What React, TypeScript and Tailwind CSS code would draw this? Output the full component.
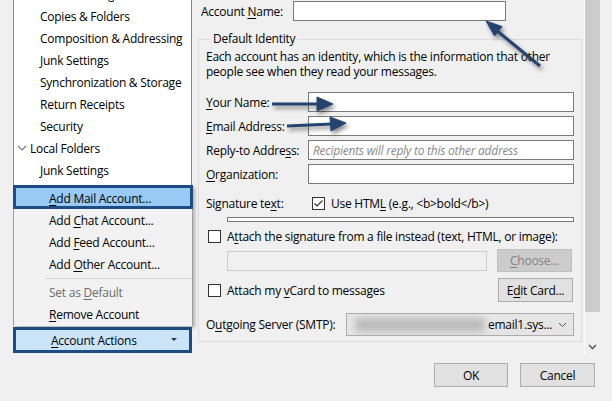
import React from "react"

const U = ({ children }: { children: React.ReactNode }) => <span className="underline underline-offset-[2px]">{children}</span>

const treeRows: { label: string; root?: boolean }[] = [
  { label: "Server Settings" },
  { label: "Copies & Folders" },
  { label: "Composition & Addressing" },
  { label: "Junk Settings" },
  { label: "Synchronization & Storage" },
  { label: "Return Receipts" },
  { label: "Security" },
  { label: "Local Folders", root: true },
  { label: "Junk Settings" },
]

function Checkbox({ checked }: { checked?: boolean }) {
  return (
    <div className="w-[13px] h-[13px] border border-[#333] bg-white flex items-center justify-center shrink-0">
      {checked && (
        <svg width="11" height="11" viewBox="0 0 11 11">
          <polyline points="1.5,5.5 4,8 9.5,2.5" fill="none" stroke="#333" strokeWidth="1.2" />
        </svg>
      )}
    </div>
  )
}

function TextInput({ placeholder }: { placeholder?: string }) {
  return (
    <div className="flex-1 h-[20px] border border-[#7a7a7a] bg-white flex items-center px-[4px]">
      {placeholder && <span className="italic text-[#8a8a8a]">{placeholder}</span>}
    </div>
  )
}

function Button({ children, disabled, className = "" }: { children: React.ReactNode; disabled?: boolean; className?: string }) {
  return (
    <div
      className={`flex items-center justify-center border ${
        disabled ? "border-[#bfbfbf] bg-[#cccccc] text-[#838383]" : "border-[#adadad] bg-[#e1e1e1] text-black"
      } ${className}`}
    >
      {children}
    </div>
  )
}

export default function App() {
  return (
    <div className="relative w-[612px] h-[401px] overflow-hidden bg-[#f0f0f0] text-black text-[12px] leading-[15px] tracking-[-0.25px] font-['Open_Sans',sans-serif]">
      <div className="flex h-[355px]">
        {/* left column: tree + account actions menu */}
        <div className="w-[197px] shrink-0 flex flex-col">
          <div className="ml-[13px] w-[179px] h-[185px] border-x border-[#828790] bg-white overflow-hidden">
            <div className="-mt-[17px]">
              {treeRows.map((row, i) => (
                <div key={i} className={`h-[22px] flex items-center ${row.root ? "pl-[2px]" : "pl-[26px]"}`}>
                  {row.root && (
                    <svg width="12" height="8" viewBox="0 0 12 8" className="mr-[2px]">
                      <polyline points="2,2 6,6 10,2" fill="none" stroke="#7a7a7a" strokeWidth="1.2" />
                    </svg>
                  )}
                  {row.label}
                </div>
              ))}
            </div>
          </div>

          <div className="ml-[13px] w-[180px] h-[141px] bg-[#f2f2f2] border-x border-[#a0a0a0] shadow-[2px_2px_3px_rgba(0,0,0,0.25)] flex flex-col">
            <div className="h-[24px] -mx-px border-[3px] border-[#1d4c84] bg-[#99c9f5] flex items-center pl-[33px] pt-[2px]">
              <span><U>A</U>dd Mail Account...</span>
            </div>
            <div className="h-[22px] flex items-center pl-[35px]">
              <span>Add <U>C</U>hat Account...</span>
            </div>
            <div className="h-[22px] flex items-center pl-[35px]">
              <span>Add <U>F</U>eed Account...</span>
            </div>
            <div className="h-[22px] flex items-center pl-[35px]">
              <span>Add <U>O</U>ther Account...</span>
            </div>
            <div className="h-[6px] flex items-center pl-[31px]">
              <div className="h-px w-full bg-[#d4d4d4]" />
            </div>
            <div className="h-[22px] flex items-center pl-[35px] text-[#6d6d6d]">
              <span>Set as <U>D</U>efault</span>
            </div>
            <div className="h-[22px] flex items-center pl-[35px]">
              <span><U>R</U>emove Account</span>
            </div>
          </div>

          <div className="ml-[13px] mt-[1px] w-[179px] h-[26px] border-[3px] border-[#1d4c84] bg-[#cce4f7] flex items-center pl-[35px] pr-[12px]">
            <span className="flex-1"><U>A</U>ccount Actions</span>
            <svg width="6" height="4" viewBox="0 0 6 4">
              <polygon points="0,0 6,0 3,3" fill="#333" />
            </svg>
          </div>
        </div>

        {/* right panel */}
        <div className="w-[387px] shrink-0 flex flex-col">
          <div className="flex items-center h-[20px] mt-[1px] pl-[4px]">
            <span className="w-[92px] shrink-0">Account <U>N</U>ame:</span>
            <div className="w-[213px] h-[20px] border border-[#7a7a7a] bg-white" />
          </div>

          <fieldset className="mt-[10px] ml-[1px] w-[384px] border border-[#dcdcdc] pl-[7px] pr-[7px] pb-[5px]">
            <legend className="ml-[4px] px-[3px] leading-[16px]">Default Identity</legend>
            <p className="pt-[2px]">
              Each account has an identity, which is the information that other
              <br />
              people see when they read your messages.
            </p>

            <div className="mt-[13px] flex flex-col gap-[4px]">
              <div className="flex items-center">
                <span className="w-[102px] shrink-0"><U>Y</U>our Name:</span>
                <TextInput />
              </div>
              <div className="flex items-center">
                <span className="w-[102px] shrink-0"><U>E</U>mail Address:</span>
                <TextInput />
              </div>
              <div className="flex items-center">
                <span className="w-[102px] shrink-0">Reply-to Addre<U>s</U>s:</span>
                <TextInput placeholder="Recipients will reply to this other address" />
              </div>
              <div className="flex items-center">
                <span className="w-[102px] shrink-0"><U>O</U>rganization:</span>
                <TextInput />
              </div>
            </div>

            <div className="mt-[9px] h-[20px] flex items-center">
              <span className="w-[106px] shrink-0">Signature te<U>x</U>t:</span>
              <Checkbox checked />
              <span className="ml-[6px]">Use HTM<U>L</U> (e.g., &lt;b&gt;bold&lt;/b&gt;)</span>
            </div>

            <div className="mt-[4px] ml-[21px] h-[5px] border border-[#7a7a7a] bg-white" />

            <div className="mt-[4px] h-[20px] flex items-center pl-[2px]">
              <Checkbox />
              <span className="ml-[6px]">A<U>t</U>tach the signature from a file instead (text, HTML, or image):</span>
            </div>

            <div className="mt-[3px] h-[23px] flex items-start">
              <div className="mt-[2px] ml-[21px] w-[260px] h-[20px] border border-[#cccccc] bg-[#f0f0f0]" />
              <Button disabled className="ml-[10px] w-[75px] h-[23px]">
                <span><U>C</U>hoose...</span>
              </Button>
            </div>

            <div className="mt-[6px] h-[24px] flex items-center pl-[2px]">
              <Checkbox />
              <span className="ml-[6px] flex-1">Attach my <U>v</U>Card to messages</span>
              <Button className="w-[75px] h-[24px] mr-[1px]">
                <span>E<U>d</U>it Card...</span>
              </Button>
            </div>

            <div className="mt-[11px] h-[23px] flex items-center">
              <span className="w-[140px] shrink-0">O<U>u</U>tgoing Server (SMTP):</span>
              <div className="flex-1 h-[23px] border border-[#acacac] bg-[#e5e5e5] flex items-center pl-[8px] pr-[6px] overflow-hidden">
                <div className="w-[130px] h-[14px] bg-[#bdbdbd] rounded-[3px] blur-[3px]" />
                <span className="ml-[3px] flex-1">email1.sys...</span>
                <svg width="9" height="6" viewBox="0 0 9 6">
                  <polyline points="1,1 4.5,4.5 8,1" fill="none" stroke="#555" strokeWidth="1" />
                </svg>
              </div>
            </div>
          </fieldset>
        </div>

        {/* scrollbar */}
        <div className="w-[16px] shrink-0 border-l border-[#fbfbfb] flex flex-col">
          <div className="h-[312px] bg-[#cdcdcd]" />
          <div className="flex-1 flex items-end justify-center pb-[5px]">
            <svg width="9" height="6" viewBox="0 0 9 6">
              <polyline points="1,1 4.5,4.5 8,1" fill="none" stroke="#606060" strokeWidth="1.6" />
            </svg>
          </div>
        </div>
        <div className="flex-1" />
      </div>

      <div className="flex justify-end gap-[12px] pt-[8px] pr-[17px]">
        <Button className="w-[74px] h-[24px]">OK</Button>
        <Button className="w-[75px] h-[24px]">Cancel</Button>
      </div>

      {/* annotation arrows */}
      <svg
        className="absolute inset-0 pointer-events-none drop-shadow-[2px_3px_2px_rgba(0,0,0,0.45)]"
        width="612"
        height="401"
        viewBox="0 0 612 401"
      >
        <g fill="#24446f" stroke="#24446f">
          <line x1="540" y1="66" x2="496" y2="30" strokeWidth="3" />
          <polygon points="486,21 502.1,26.6 494.5,35.8" strokeWidth="1" />
          <line x1="272" y1="104" x2="319" y2="104" strokeWidth="3" />
          <polygon points="333,104 317,97 317,111" strokeWidth="1" />
          <line x1="287" y1="126" x2="332" y2="124" strokeWidth="3" />
          <polygon points="346,123 330,117 331,131" strokeWidth="1" />
        </g>
      </svg>
    </div>
  )
}
